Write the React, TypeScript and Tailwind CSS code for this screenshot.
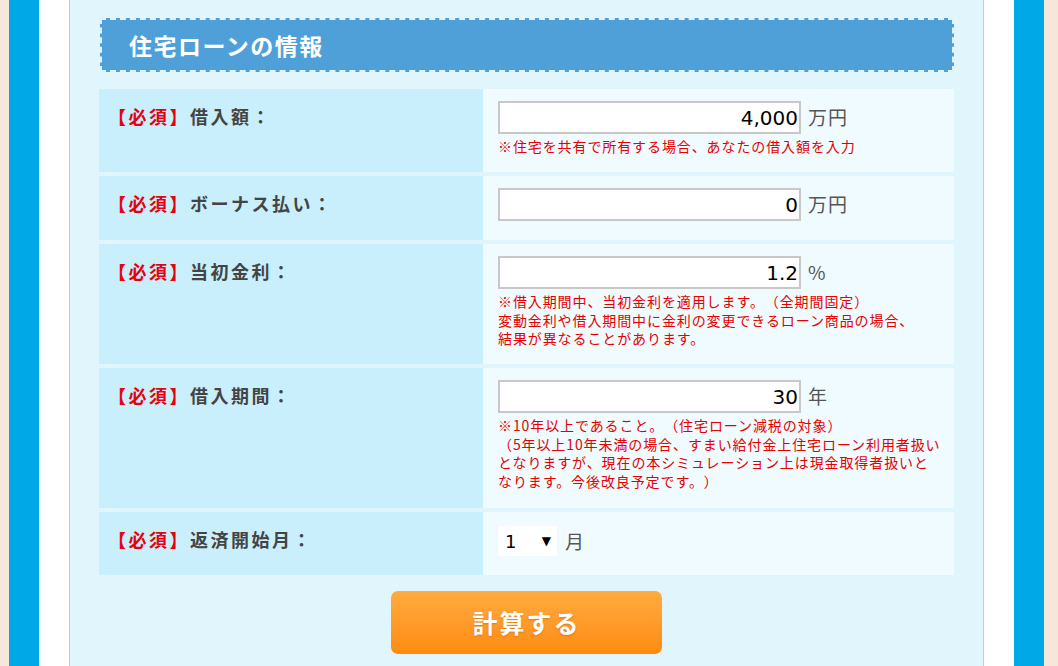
const jp = "font-['Noto_Sans_CJK_JP','Noto_Sans',sans-serif] [text-spacing-trim:space-all]";

type Row = {
  label: string;
  height: string;
  value?: string;
  unit: string;
  notes?: string[];
  select?: boolean;
};

const rows: Row[] = [
  {
    label: "借入額：",
    height: "h-[83px]",
    value: "4,000",
    unit: "万円",
    notes: ["※住宅を共有で所有する場合、あなたの借入額を入力"],
  },
  { label: "ボーナス払い：", height: "h-[64px]", value: "0", unit: "万円" },
  {
    label: "当初金利：",
    height: "h-[120px]",
    value: "1.2",
    unit: "%",
    notes: [
      "※借入期間中、当初金利を適用します。（全期間固定）",
      "変動金利や借入期間中に金利の変更できるローン商品の場合、",
      "結果が異なることがあります。",
    ],
  },
  {
    label: "借入期間：",
    height: "h-[140px]",
    value: "30",
    unit: "年",
    notes: [
      "※10年以上であること。（住宅ローン減税の対象）",
      "（5年以上10年未満の場合、すまい給付金上住宅ローン利用者扱い",
      "となりますが、現在の本シミュレーション上は現金取得者扱いと",
      "なります。今後改良予定です。）",
    ],
  },
  { label: "返済開始月：", height: "h-[63px]", unit: "月", select: true },
];

function FormRow({ row }: { row: Row }) {
  return (
    <div className={`flex ${row.height}`}>
      <div className="w-[384px] bg-[#c9effc] pl-[9px] pt-[14px]">
        <p className={`${jp} text-[18px] leading-[27px] font-bold tracking-[2.5px] text-[#444]`}>
          <span className="text-[#e60012]">【必須】</span>
          {row.label}
        </p>
      </div>
      <div className="flex-1 bg-[#effbff] pl-[15px] pt-[12px]">
        {row.select ? (
          <div className="flex items-center pt-[2px]">
            <div className="flex h-[30px] w-[59px] items-center justify-between bg-white pl-[7px] pr-[6px] font-['DejaVu_Sans',sans-serif] text-[18px] text-black">
              <span>1</span>
              <span className="text-[12px]">▼</span>
            </div>
            <span className={`${jp} ml-[8px] text-[19px] text-[#555]`}>{row.unit}</span>
          </div>
        ) : (
          <div className="flex items-center">
            <div className="flex h-[33px] w-[303px] items-center justify-end border-2 border-[#c8c8c8] bg-white pr-[1px] font-['DejaVu_Sans',sans-serif] text-[20px] text-black">
              {row.value}
            </div>
            <span className={`${jp} ml-[7px] text-[19px] tracking-[1px] text-[#555]`}>{row.unit}</span>
          </div>
        )}
        {row.notes && (
          <div className={`${jp} mt-[3px] text-[14px] leading-[18.5px] tracking-[0.9px] text-[#e60000] whitespace-nowrap`}>
            {row.notes.map((n) => (
              <div key={n}>{n}</div>
            ))}
          </div>
        )}
      </div>
    </div>
  );
}

export default function App() {
  return (
    <div lang="ja" className="flex h-[666px] w-[1058px] overflow-hidden bg-[#f5e7d9]">
      <div className="w-[9px] shrink-0" />
      <div className="w-[30px] shrink-0 bg-[#00a8e8]" />
      <div className="w-[30px] shrink-0 bg-white" />
      <div className="w-[915px] shrink-0 border-x border-[#d3cea0] bg-[#e0f6fc] px-[29px] pt-[18px]">
        <div className="ml-[1px] flex h-[54px] items-center border-2 border-dashed border-[#dff3fd] bg-[#4fa0d8] pl-[27px]">
          <h2 className={`${jp} text-[23px] font-bold tracking-[1.5px] text-white`}>住宅ローンの情報</h2>
        </div>
        <div className="mt-[17px] flex flex-col gap-[4px]">
          {rows.map((r) => (
            <FormRow key={r.label} row={r} />
          ))}
        </div>
        <div className="mt-[16px] flex justify-center">
          <button
            className={`${jp} flex h-[63px] w-[271px] items-center justify-center rounded-[7px] bg-gradient-to-b from-[#ffab3e] to-[#ff8b0c] text-[25px] font-bold tracking-[2px] text-white [text-shadow:0_1px_2px_rgba(150,70,0,0.35)]`}
          >
            計算する
          </button>
        </div>
      </div>
      <div className="w-[30px] shrink-0 bg-white" />
      <div className="w-[30px] shrink-0 bg-[#00a8e8]" />
      <div className="w-[14px] shrink-0" />
    </div>
  );
}
